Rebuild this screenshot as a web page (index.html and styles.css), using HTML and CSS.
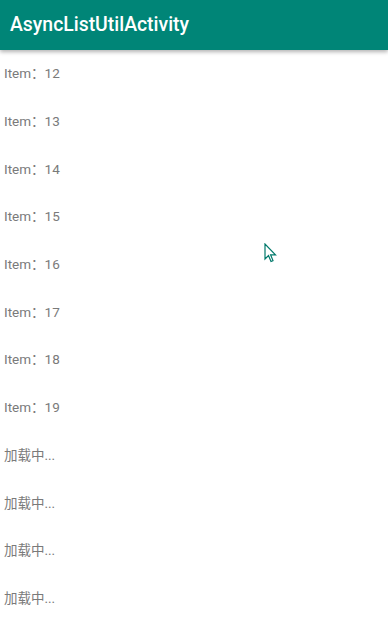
FILE: index.html
```html
<!doctype html>
<html>
<head>
    <meta name="viewport" content="width=device-width, initial-scale=1.0">
    <link rel="stylesheet" href="styles.css">
</head>
<body>
    <div class="toolbar">
        <span class="title">AsyncListUtilActivity</span>
    </div>

    <div class="list">
        <div class="row">Item：12</div>
        <div class="row">Item：13</div>
        <div class="row">Item：14</div>
        <div class="row">Item：15</div>
        <div class="row">Item：16</div>
        <div class="row">Item：17</div>
        <div class="row">Item：18</div>
        <div class="row">Item：19</div>
        <div class="row">加载中...</div>
        <div class="row">加载中...</div>
        <div class="row">加载中...</div>
        <div class="row">加载中...</div>
    </div>

    <svg class="cursor" width="14" height="22" viewBox="0 0 14 22">
        <path d="M1 1 L1 16 L4.5 12.5 L7 18.5 L9 17.6 L6.6 11.8 L11.5 11.8 Z" fill="#fff" stroke="#00796b" stroke-width="1.2" stroke-linejoin="miter"/>
    </svg>
</body>
</html>
```

FILE: styles.css
```css
html, body {
    margin: 0;
    background-color: #fff;
    font-family: Roboto, 'Noto Sans CJK SC', sans-serif;
}

.toolbar {
    height: 50px;
    background: #008577;
    color: #fff;
    display: flex;
    align-items: center;
    padding-left: 10px;
    padding-bottom: 1px;
    box-sizing: border-box;
    box-shadow: 0 2px 4px rgba(0, 0, 0, 0.3);
    position: relative;
}

.title {
    font-size: 19.4px;
    font-weight: 500;
}

.list {
    display: flex;
    flex-direction: column;
}

.row {
    height: 47.7px;
    box-sizing: border-box;
    padding-bottom: 3px;
    display: flex;
    align-items: center;
    padding-left: 4px;
    font-size: 13.5px;
    color: #7a7a7a;
}

.cursor {
    position: absolute;
    left: 264px;
    top: 243px;
}
```
